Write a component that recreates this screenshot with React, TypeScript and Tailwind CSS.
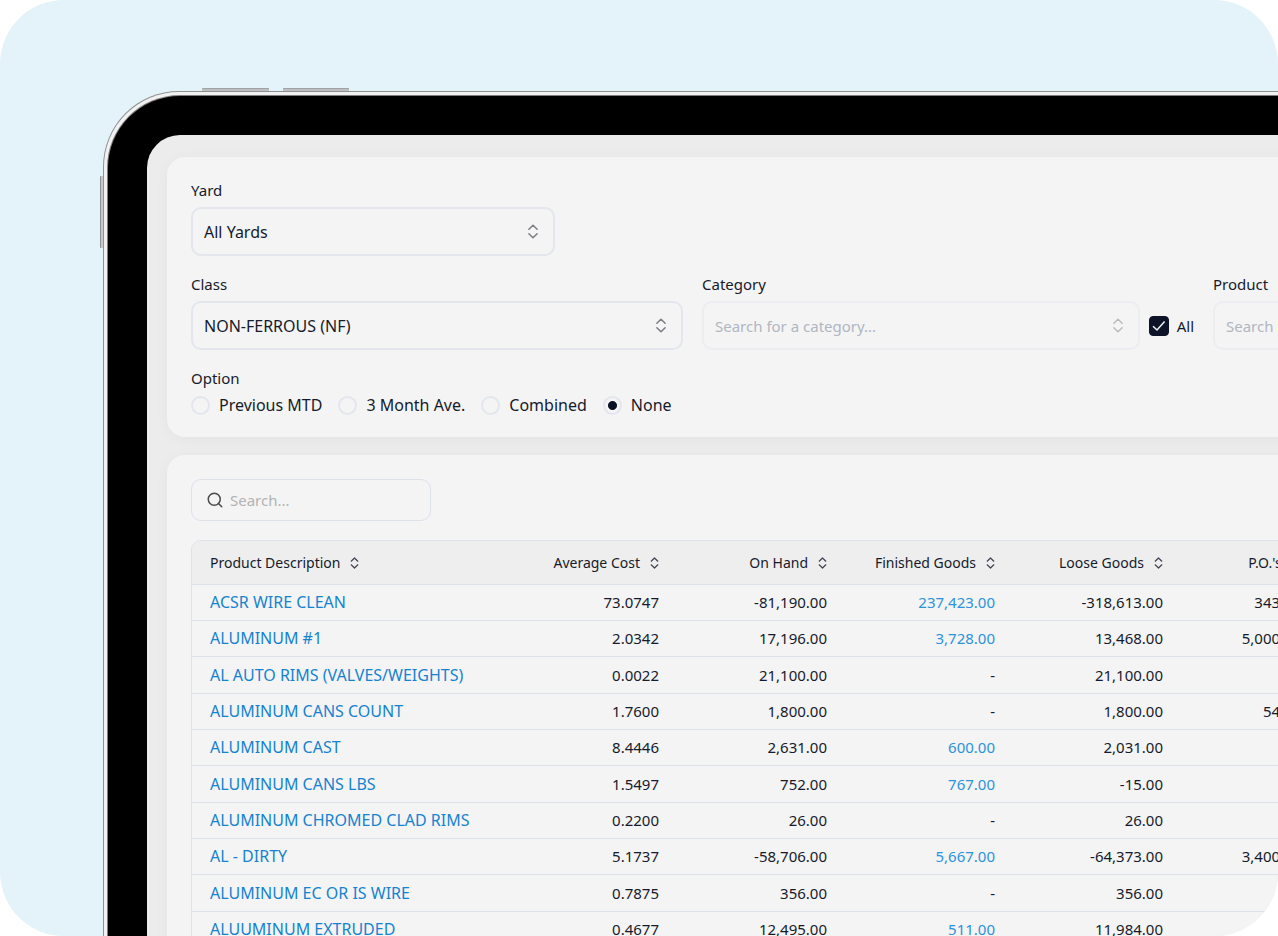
import { useState } from 'react'
import { Search } from 'lucide-react'

interface ProductRow {
  name: string
  cost: string
  onHand: string
  finished: string
  loose: string
  orders: string
}

const products: ProductRow[] = [
  { name: 'ACSR WIRE CLEAN', cost: '73.0747', onHand: '-81,190.00', finished: '237,423.00', loose: '-318,613.00', orders: '343,000.00' },
  { name: 'ALUMINUM #1', cost: '2.0342', onHand: '17,196.00', finished: '3,728.00', loose: '13,468.00', orders: '5,000,000.00' },
  { name: 'AL AUTO RIMS (VALVES/WEIGHTS)', cost: '0.0022', onHand: '21,100.00', finished: '-', loose: '21,100.00', orders: '-' },
  { name: 'ALUMINUM CANS COUNT', cost: '1.7600', onHand: '1,800.00', finished: '-', loose: '1,800.00', orders: '54,000.00' },
  { name: 'ALUMINUM CAST', cost: '8.4446', onHand: '2,631.00', finished: '600.00', loose: '2,031.00', orders: '-' },
  { name: 'ALUMINUM CANS LBS', cost: '1.5497', onHand: '752.00', finished: '767.00', loose: '-15.00', orders: '-' },
  { name: 'ALUMINUM CHROMED CLAD RIMS', cost: '0.2200', onHand: '26.00', finished: '-', loose: '26.00', orders: '-' },
  { name: 'AL - DIRTY', cost: '5.1737', onHand: '-58,706.00', finished: '5,667.00', loose: '-64,373.00', orders: '3,400,000.00' },
  { name: 'ALUMINUM EC OR IS WIRE', cost: '0.7875', onHand: '356.00', finished: '-', loose: '356.00', orders: '-' },
  { name: 'ALUUMINUM EXTRUDED', cost: '0.4677', onHand: '12,495.00', finished: '511.00', loose: '11,984.00', orders: '-' },
]

const columns = ['Average Cost', 'On Hand', 'Finished Goods', 'Loose Goods', "P.O.'s Due"]

const options = ['Previous MTD', '3 Month Ave.', 'Combined', 'None']

function SortIcon({ className }: { className?: string }) {
  return (
    <svg
      viewBox="0 0 12 16"
      fill="none"
      stroke="currentColor"
      strokeWidth="1.6"
      strokeLinecap="round"
      strokeLinejoin="round"
      aria-hidden="true"
      className={className}
    >
      <path d="M1.6 5.6 6 1.3l4.4 4.3M1.6 10.4 6 14.7l4.4-4.3" />
    </svg>
  )
}

function SelectField({ id, label, value }: { id: string; label: string; value: string }) {
  return (
    <div>
      <label htmlFor={id} className="mb-2 block leading-[18px]">
        {label}
      </label>
      <div className="relative">
        <select
          id={id}
          className="block h-[49px] w-full appearance-none rounded-[10px] border-2 border-[#e3e6ec] bg-transparent pl-[11px] pr-10 text-base"
        >
          <option>{value}</option>
        </select>
        <SortIcon className="pointer-events-none absolute right-4 top-[17px] h-[15px] w-3 text-[#7c7c84]" />
      </div>
    </div>
  )
}

function LookupField({ id, label, placeholder }: { id: string; label: string; placeholder: string }) {
  const [all, setAll] = useState(true)

  return (
    <div>
      <label htmlFor={id} className="mb-2 block leading-[18px]">
        {label}
      </label>
      <div className="flex items-center gap-[9px]">
        <div className="relative flex-1">
          <input
            id={id}
            type="text"
            disabled={all}
            placeholder={placeholder}
            className="block h-[49px] w-full rounded-[10px] border-2 border-[#ebedf1] bg-transparent pl-[11px] pr-10 placeholder:text-[#b0b6c2]"
          />
          <SortIcon className="pointer-events-none absolute right-4 top-[17px] h-[15px] w-3 text-[#bbbbbf]" />
        </div>
        <label className="flex items-center gap-2">
          <span className="relative flex">
            <input
              type="checkbox"
              checked={all}
              onChange={(e) => setAll(e.target.checked)}
              className="peer h-5 w-5 appearance-none rounded-[4px] border border-[#0d1428] checked:bg-[#0d1428]"
            />
            <svg
              viewBox="0 0 20 20"
              fill="none"
              stroke="#f4f4f4"
              strokeWidth="1.5"
              aria-hidden="true"
              className="pointer-events-none absolute inset-0 hidden h-5 w-5 peer-checked:block"
            >
              <path d="M4 10.2 8 14l7.6-8.6" />
            </svg>
          </span>
          All
        </label>
      </div>
    </div>
  )
}

function Filters() {
  const [option, setOption] = useState('None')

  return (
    <section className="flex flex-col gap-[19px] rounded-[18px] bg-[#f4f4f4] px-6 pb-[22px] pt-6 shadow-[0_2px_14px_rgba(0,0,0,0.04)]">
      <div className="grid grid-cols-4 gap-[19px]">
        <SelectField id="yard" label="Yard" value="All Yards" />
      </div>
      <div className="grid grid-cols-3 gap-[19px]">
        <SelectField id="class" label="Class" value="NON-FERROUS (NF)" />
        <LookupField id="category" label="Category" placeholder="Search for a category..." />
        <LookupField id="product" label="Product" placeholder="Search for a product..." />
      </div>
      <fieldset>
        <legend className="mb-2 leading-[18px]">Option</legend>
        <div className="flex gap-4">
          {options.map((item) => (
            <label key={item} className="flex items-center gap-[9px] text-base leading-5">
              <input
                type="radio"
                name="option"
                checked={option === item}
                onChange={() => setOption(item)}
                className="h-[19px] w-[19px] appearance-none rounded-full border-2 border-[#e3e6ed] checked:bg-[radial-gradient(circle,#0b1124_0_4px,transparent_5px)]"
              />
              {item}
            </label>
          ))}
        </div>
      </fieldset>
    </section>
  )
}

function Products() {
  return (
    <section className="rounded-[18px] bg-[#f4f4f4] p-6 shadow-[0_2px_14px_rgba(0,0,0,0.04)]">
      <label className="mb-[19px] flex h-[42px] w-60 items-center gap-1.5 rounded-[10px] border border-[#dde1ea] px-3.5">
        <Search className="h-[18px] w-[18px] shrink-0 text-[#4a4a4a]" strokeWidth={2} />
        <input
          type="search"
          aria-label="Search products"
          placeholder="Search..."
          className="w-full min-w-0 bg-transparent placeholder:text-[#b3b3b3]"
        />
      </label>

      <div className="overflow-hidden rounded-[10px] border border-[#dde1ea]">
        <table className="w-full table-fixed border-collapse">
          <thead className="bg-[#eeeeee] text-sm">
            <tr className="h-[43px]">
              <th className="w-[317px] pl-[18px] pt-0.5 text-left font-normal">
                <button type="button" className="inline-flex items-center gap-2.5">
                  Product Description
                  <SortIcon className="h-3 w-[9px] text-[#3f4250]" />
                </button>
              </th>
              {columns.map((column) => (
                <th key={column} className="w-[168px] pr-[18px] pt-0.5 text-right font-normal">
                  <button type="button" className="inline-flex items-center gap-2.5 whitespace-nowrap">
                    {column}
                    <SortIcon className="h-3 w-[9px] text-[#3f4250]" />
                  </button>
                </th>
              ))}
              <th />
            </tr>
          </thead>
          <tbody>
            {products.map((row) => (
              <tr key={row.name} className="h-9 border-t border-[#dde1ea] nth-[3n]:h-[37px]">
                <td className="whitespace-nowrap pl-[18px] text-base leading-5">
                  <a href="#" className="text-[#1583d0]">
                    {row.name}
                  </a>
                </td>
                <td className="pr-[18px] text-right">{row.cost}</td>
                <td className="pr-[18px] text-right">{row.onHand}</td>
                <td className="pr-[18px] text-right">
                  {row.finished === '-' ? (
                    '-'
                  ) : (
                    <a href="#" className="text-[#2b93db]">
                      {row.finished}
                    </a>
                  )}
                </td>
                <td className="pr-[18px] text-right">{row.loose}</td>
                <td className="pr-[18px] text-right">{row.orders}</td>
                <td />
              </tr>
            ))}
          </tbody>
        </table>
      </div>
    </section>
  )
}

export default function App() {
  return (
    <div className="bg-white">
      <main className="h-screen overflow-hidden rounded-[64px] bg-[#e4f3fa] pl-[103px] pt-[91px] font-['Noto_Sans','Open_Sans',sans-serif] text-[15px] leading-5 text-[#161b2c]">
        {/* Tablet, running off the right and bottom edges */}
        <div className="relative w-[calc(100%+515px)] rounded-t-[76px] border border-b-0 border-[#8f9193] bg-[#f1f1f1] p-1 pb-0">
          <span className="absolute -top-1 left-[98px] h-[3px] w-[67px] rounded-t-[1px] border-t border-[#a0a2a4] bg-[#bcbebf]" />
          <span className="absolute -top-1 left-[179px] h-[3px] w-[66px] rounded-t-[1px] border-t border-[#a0a2a4] bg-[#bcbebf]" />
          <span className="absolute -left-1 top-[84px] h-[72px] w-[3px] rounded-l-[1px] border-l border-[#8f9193] bg-[#c6c8c9]" />
          <div className="rounded-t-[72px] border-x-[39px] border-t-[39px] border-black bg-[#ececec] ring-1 ring-[#7d7d7d]">
            <div className="flex min-h-screen flex-col gap-[18px] px-5 pt-[22px]">
              <Filters />
              <Products />
            </div>
          </div>
        </div>
      </main>
    </div>
  )
}
